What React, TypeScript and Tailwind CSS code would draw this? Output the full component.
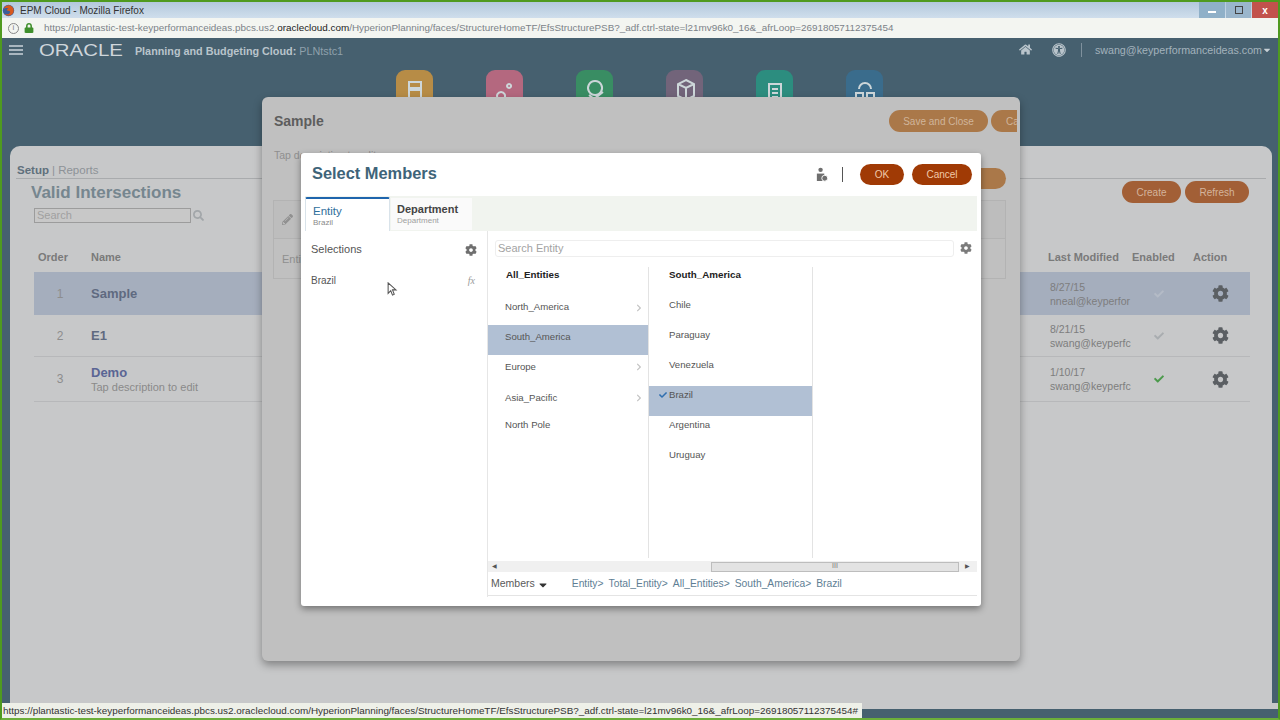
import { FaCheck, FaCog, FaHome, FaLock, FaPencilAlt, FaSearch, FaUniversalAccess, FaCaretDown, FaChevronRight } from "react-icons/fa"

const sans = "font-['Liberation_Sans',Arial,sans-serif]"

const tiles = [
  { cls: "bg-[#b78c46]", glyph: "M12 12h12v6h-12zM12 20h12v10h-12z" },
  { cls: "bg-[#b4687f]", glyph: "M22 14a2 2 0 1 0 .1 0zM14 22a4 4 0 1 0 .1 0z" },
  { cls: "bg-[#398d63]", glyph: "M18 11a7 7 0 1 0 .1 0zM12 25l5 4 9-7" },
  { cls: "bg-[#72647a]", glyph: "M19 10l8 4v12l-8 4-8-4v-12zM11 14l8 4 8-4M19 18v12" },
  { cls: "bg-[#2c8d7f]", glyph: "M12 14h12v18h-12zM15 19h6M15 23h6M15 27h6" },
  { cls: "bg-[#3a6c8c]", glyph: "M12 19a6 6 0 0 1 12 0M9 23h7v7h-7zM20 23h7v7h-7z" },
]

const rows = [
  { order: "1", name: "Sample", date: "8/27/15", user: "nneal@keyperfor", selected: true, check: "text-[#b4bbc6]", h: "h-[43px]" },
  { order: "2", name: "E1", date: "8/21/15", user: "swang@keyperfc", selected: false, check: "text-[#a9adb0]", h: "h-[42px]" },
  { order: "3", name: "Demo", sub: "Tap description to edit", date: "1/10/17", user: "swang@keyperfc", selected: false, check: "text-[#4c9a4c]", h: "h-[45px]" },
]

const parents = [
  { label: "North_America", arrow: true, h: "h-[31px]", pad: "pb-[4px]" },
  { label: "South_America", arrow: false, selected: true, h: "h-[30px]", pad: "pb-[6px]" },
  { label: "Europe", arrow: true, h: "h-[30px]", pad: "pb-[6px]" },
  { label: "Asia_Pacific", arrow: true, h: "h-[31px]", pad: "pb-[5px]" },
  { label: "North Pole", arrow: false, h: "h-[23px]", pad: "pb-[5px]" },
]

const countries = ["Chile", "Paraguay", "Venezuela", "Brazil", "Argentina", "Uruguay"]
const crumbs = ["Entity>", "Total_Entity>", "All_Entities>", "South_America>", "Brazil"]

function Pill({ label, cls }: { label: string; cls: string }) {
  return <div className={`flex items-center justify-center rounded-full text-[10px] ${cls}`}>{label}</div>
}

function Titlebar() {
  return (
    <div className="flex h-[16px] items-center bg-gradient-to-b from-[#b3c8dc] to-[#cfdeec] text-[10px] text-[#333]">
      <svg viewBox="0 0 16 16" className="h-[13px] w-[13px]">
        <circle cx="8" cy="8" r="7" fill="#3a5f9a" />
        <path d="M2 6c1-4 7-6 10-3 3 2 3 7 1 9-2 3-8 3-10 0 2 1 6 1 7-2 0-2-3-1-4-2 0-2 1-2 2-3-2 0-4 0-6 1z" fill="#d8591f" />
      </svg>
      <span className="ml-[5px]">EPM Cloud - Mozilla Firefox</span>
      <div className="ml-auto flex h-[16px] gap-px self-start">
        <div className="flex w-[26px] items-center justify-center bg-[#8fb0c8]"><div className="mt-[4px] h-[2px] w-[8px] bg-white" /></div>
        <div className="flex w-[25px] items-center justify-center bg-[#9ab6cc]"><div className="h-[8px] w-[8px] border border-[#444]" /></div>
        <div className="flex w-[26px] items-center justify-center bg-[#c2524c] text-[10px] font-bold text-white">x</div>
      </div>
    </div>
  )
}

function Urlbar() {
  return (
    <div className="flex h-[20px] items-center bg-[#f3f5f1] pl-[6px] text-[9.9px] text-[#7b8288]">
      <div className="flex h-[11px] w-[11px] items-center justify-center rounded-full border border-[#888] text-[8px] leading-none">i</div>
      <FaLock className="ml-[5px] text-[10px] text-[#3f8f2c]" />
      <span className="ml-[10px] whitespace-nowrap">
        https://plantastic-test-keyperformanceideas.pbcs.us2.<span className="text-[#222]">oraclecloud.com</span>/HyperionPlanning/faces/StructureHomeTF/EfsStructurePSB?_adf.ctrl-state=l21mv96k0_16&amp;_afrLoop=26918057112375454
      </span>
    </div>
  )
}

function Header() {
  return (
    <div className="h-[108px] pl-[7px] pr-[6px]">
      <div className="flex h-[24px] items-center">
        <div className="flex w-[14px] flex-col gap-[2px]">
          <div className="h-[2px] bg-[#a9b6bf]" />
          <div className="h-[2px] bg-[#a9b6bf]" />
          <div className="h-[2px] bg-[#a9b6bf]" />
        </div>
        <span className="ml-[16px] origin-left text-[17px] leading-none text-[#cfd6db] [transform:scaleX(1.2)]">ORACLE</span>
        <span className="ml-[26px] mt-[3px] text-[10.8px] font-bold text-[#b9c4cb]">Planning and Budgeting Cloud:</span>
        <span className="ml-[3px] mt-[3px] text-[10.8px] text-[#8fa1ac]">PLNtstc1</span>
        <div className="ml-auto flex items-center">
          <FaHome className="text-[13px] text-[#b9c4cb]" />
          <FaUniversalAccess className="ml-[20px] text-[14px] text-[#b9c4cb]" />
          <div className="ml-[15px] h-[14px] w-px bg-[#7f919d]" />
          <span className="ml-[13px] text-[10.7px] text-[#a3b2bc]">swang@keyperformanceideas.com</span>
          <FaCaretDown className="text-[10px] text-[#c7d0d6]" />
        </div>
      </div>
      <div className="ml-[387px] mt-[8px] flex gap-[53px]">
        {tiles.map((t, i) => (
          <div key={i} className={`flex h-[38px] w-[37px] justify-center rounded-[9px] ${t.cls}`}>
            <svg viewBox="0 0 36 36" className="h-[36px] w-[36px]" fill="none" stroke="#cdd6d9" strokeWidth="2">
              <path d={t.glyph} />
            </svg>
          </div>
        ))}
      </div>
    </div>
  )
}

function ValidIntersections() {
  return (
    <div className="ml-[8px] mr-[6px] h-[557px] rounded-t-[10px] bg-[#c7c8c9] px-[6px] pt-[18px] text-[#6d6d6d]">
      <div className="flex h-[15px] items-center border-b border-[#a9abad] pb-[1px] text-[11.5px]">
        <span className="ml-px font-bold text-[#60707c]">Setup</span>
        <span className="ml-[3px] text-[#8d9297]">| Reports</span>
      </div>
      <div className="flex px-[15px]">
        <div>
          <div className="mt-[4px] text-[17px] font-bold leading-[20px] text-[#76868f]">Valid Intersections</div>
          <div className="ml-[3px] mt-[5px] flex items-center">
            <div className="flex h-[15px] w-[157px] items-center border border-[#9c9c9c] bg-[#c8c8c8] pl-[2px] text-[11px] text-[#a0a0a0]">Search</div>
            <FaSearch className="ml-[2px] text-[11px] text-[#a2a6a9]" />
          </div>
        </div>
        <div className="ml-auto mr-[2px] mt-[2px] flex h-[22px] gap-[4px]">
          <Pill label="Create" cls="w-[59px] bg-[#a25f36] text-[#d4b49c]" />
          <Pill label="Refresh" cls="w-[64px] bg-[#a25f36] text-[#d4b49c]" />
        </div>
      </div>
      <div className="ml-[18px] mr-[16px] mt-[27px]">
        <div className="flex h-[15px] items-center text-[11px] font-bold text-[#7a7a7a]">
          <span className="ml-[4px] w-[53px]">Order</span>
          <span>Name</span>
          <span className="ml-auto w-[84px]">Last Modified</span>
          <span className="w-[61px]">Enabled</span>
          <span className="w-[57px]">Action</span>
        </div>
        <div className="mt-[7px]">
          {rows.map((r) => (
            <div key={r.order} className={`flex items-center ${r.h} ${r.selected ? "bg-[#a5aebd]" : "border-b border-[#b7b8ba]"}`}>
              <span className="w-[57px] pr-[5px] text-center text-[12px] text-[#8d8d8d]">{r.order}</span>
              <div className="flex flex-col leading-none">
                <span className={`text-[13px] font-bold ${r.name === "Demo" ? "text-[#5a6594]" : "text-[#5f6a80]"}`}>{r.name}</span>
                {r.sub && <span className="mt-[3px] text-[11px] text-[#8a8a8a]">{r.sub}</span>}
              </div>
              <div className="ml-auto w-[82px] whitespace-nowrap text-[10.5px] leading-[14px] text-[#7d7d7d]">
                <div>{r.date}</div>
                <div>{r.user}</div>
              </div>
              <div className="flex w-[54px] justify-center"><FaCheck className={`text-[10px] ${r.check}`} /></div>
              <div className="flex w-[64px] justify-center pl-[4px]"><FaCog className="text-[17px] text-[#5b5f63]" /></div>
            </div>
          ))}
        </div>
      </div>
    </div>
  )
}

function SampleModal() {
  return (
    <div className="absolute left-[262px] top-[97px] h-[564px] w-[758px] overflow-hidden rounded-[6px] bg-[#c0c0c0] px-[12px] shadow-[0_4px_8px_rgba(0,0,0,0.35)]">
      <div className="flex h-[48px] items-center">
        <span className="text-[14px] font-bold text-[#5d5d5d]">Sample</span>
        <div className="ml-auto mr-[-9px] flex h-[22px] gap-[3px]">
          <Pill label="Save and Close" cls="w-[99px] bg-[#aa7849] text-[#d0b59b]" />
          <div className="flex w-[26px] items-center overflow-hidden rounded-l-full bg-[#aa7849] pl-[15px] text-[10px] text-[#d0b59b]">Ca</div>
        </div>
      </div>
      <div className="text-[10.5px] leading-[20px] text-[#8f8f8f]">Tap description to edit</div>
      <div className="ml-[-1px] mr-[2px] mt-[35px] h-[79px] border border-[#b3b3b3]">
        <div className="flex h-[38px] items-center border-b border-[#b3b3b3] bg-[#bdbdbd] pl-[8px]">
          <FaPencilAlt className="text-[11px] text-[#909090]" />
        </div>
        <div className="pl-[8px] pt-[12px] text-[11px] text-[#8f8f8f]">Entity</div>
      </div>
      <div className="absolute right-[14px] top-[71px] h-[21px] w-[40px] rounded-full bg-[#aa7849]" />
    </div>
  )
}

function Members() {
  return (
    <div className="flex min-w-0 flex-1 flex-col">
      <div className="flex h-[36px] items-center pb-[2px] pl-[7px] pr-[5px]">
        <div className="flex h-[17px] w-[460px] items-center rounded-[3px] border border-[#eeeeee] pl-[2px] text-[11px] text-[#a3a3a3]">Search Entity</div>
        <FaCog className="ml-[6px] text-[12px] text-[#7b7b7b]" />
      </div>
      <div className="flex h-[291px]">
        <div className="w-[160px] text-[9.6px] text-[#555]">
          <div className="h-[26px] pl-[18px] pt-[1px] text-[9.8px] font-bold leading-[14px] text-[#222]">All_Entities</div>
          <div className="pt-px">
            {parents.map((p) => (
              <div key={p.label} className={`flex items-center pl-[17px] pr-[5px] ${p.h} ${p.pad} ${p.selected ? "bg-[#b1c0d4]" : ""}`}>
                <span>{p.label}</span>
                {p.arrow && <FaChevronRight className="ml-auto text-[8px] text-[#c4c4c4]" />}
              </div>
            ))}
          </div>
        </div>
        <div className="w-[165px] border-x border-[#e3e3e3] text-[9.6px] text-[#555]">
          <div className="h-[29px] pl-[20px] pt-[1px] text-[9.8px] font-bold leading-[14px] text-[#222]">South_America</div>
          <div>
            {countries.map((c) => (
              <div key={c} className={`flex h-[30px] items-start pt-[3px] ${c === "Brazil" ? "bg-[#b1c0d4]" : ""}`}>
                <div className="flex w-[20px] justify-end pr-[2px] pt-[2px]">
                  {c === "Brazil" && <FaCheck className="text-[8px] text-[#2f6fb0]" />}
                </div>
                <span className="leading-[12px]">{c}</span>
              </div>
            ))}
          </div>
        </div>
      </div>
      <div className="mt-[3px] flex h-[11px] items-center bg-[#f0f0f0] text-[6px] text-[#555]">
        <span className="w-[223px] pl-[4px]">◀</span>
        <div className="flex h-[10px] w-[248px] items-center justify-center border border-[#bdbdbd] bg-[#e3e3e3] text-[7px] text-[#777]">III</div>
        <span className="pl-[6px]">▶</span>
      </div>
      <div className="flex h-[24px] items-center border-b border-[#e4e4e4] text-[10.5px]">
        <span className="ml-[3px] text-[#5a5a5a]">Members</span>
        <FaCaretDown className="ml-[2px] mt-[2px] text-[12px] text-[#333]" />
        <div className="ml-[23px] flex gap-[5px] text-[10.3px] text-[#5e7e94]">
          {crumbs.map((c) => <span key={c}>{c}</span>)}
        </div>
      </div>
    </div>
  )
}

function SelectMembers() {
  return (
    <div className="absolute left-[301px] top-[153px] flex h-[453px] w-[680px] flex-col rounded-[3px] bg-white pl-[4px] pr-[4px] shadow-[0_3px_7px_rgba(0,0,0,0.4)]">
      <div className="flex h-[43px] items-center pr-[5px]">
        <span className="mb-[3px] ml-[7px] text-[16.4px] font-bold text-[#3e6479]">Select Members</span>
        <svg viewBox="0 0 14 16" className="ml-auto h-[15px] w-[13px]" fill="#6f6f6f">
          <circle cx="6" cy="3" r="2.4" />
          <path d="M2 7h8v8h-8z" />
          <circle cx="10.5" cy="12" r="3.2" stroke="#fff" />
        </svg>
        <div className="ml-[14px] h-[15px] w-px bg-[#555]" />
        <Pill label="OK" cls="ml-[17px] h-[21px] w-[44px] bg-[#a03a05] text-[#f0c9a8]" />
        <Pill label="Cancel" cls="ml-[8px] h-[21px] w-[60px] bg-[#a03a05] text-[#f0c9a8]" />
      </div>
      <div className="flex h-[35px] bg-[#f1f4ef]">
        <div className="mt-[1px] w-[85px] rounded-t-[2px] border-x border-t-2 border-[#d9e3ea] border-t-[#1f65ad] bg-white pl-[7px] pt-[6px]">
          <div className="text-[11.5px] leading-[13px] text-[#2f6f9c]">Entity</div>
          <div className="text-[8px] leading-[9px] text-[#8a8a8a]">Brazil</div>
        </div>
        <div className="ml-px mt-[2px] h-[32px] w-[81px] bg-[#fafafa] pl-[6px] pt-[5px]">
          <div className="text-[11px] font-bold leading-[13px] text-[#444]">Department</div>
          <div className="text-[8px] leading-[9px] text-[#a0a0a0]">Department</div>
        </div>
      </div>
      <div className="flex flex-1">
        <div className="w-[183px] border-r border-[#e6e6e6] px-[6px]">
          <div className="flex h-[37px] items-center pr-[4px] text-[11px] text-[#555]">
            <span>Selections</span>
            <FaCog className="ml-auto text-[12px] text-[#6f6f6f]" />
          </div>
          <div className="relative flex h-[24px] items-center pr-[6px] text-[10px] text-[#555]">
            <span>Brazil</span>
            <span className="ml-auto font-['Liberation_Serif',serif] text-[10px] italic text-[#9a9a9a]">fx</span>
            <svg viewBox="0 0 12 16" className="absolute left-[76px] top-[14px] h-[14px] w-[11px]" fill="#fff" stroke="#555" strokeWidth="1.2">
              <path d="M1 1v12l3-3 2 5 2-1-2-5h4z" />
            </svg>
          </div>
        </div>
        <Members />
      </div>
      <div className="h-[9px]" />
    </div>
  )
}

function StatusBar() {
  return (
    <div className="flex h-[15px] items-start bg-[#c7c8c9]">
      <div className="flex h-[15px] w-[860px] items-center whitespace-nowrap bg-[#eef0e8] pl-[1px] pt-[2px] text-[9.88px] text-[#333]">
        https://plantastic-test-keyperformanceideas.pbcs.us2.oraclecloud.com/HyperionPlanning/faces/StructureHomeTF/EfsStructurePSB?_adf.ctrl-state=l21mv96k0_16&amp;_afrLoop=26918057112375454#
      </div>
      <div className="mt-[6px] h-[9px] flex-1 bg-[#46606f]" />
    </div>
  )
}

export default function App() {
  return (
    <div className={`relative h-[720px] w-[1280px] overflow-hidden bg-[#46606f] ${sans}`}>
      <div className="border-x-2 border-t-2 border-[#4f9a1f]">
        <Titlebar />
        <Urlbar />
      </div>
      <div className="border-x-2 border-[#4f9a1f]">
        <Header />
        <ValidIntersections />
      </div>
      <div className="border-x-2 border-b-2 border-x-[#4f9a1f] border-b-[#6cae3a]">
        <StatusBar />
      </div>
      <SampleModal />
      <SelectMembers />
    </div>
  )
}
